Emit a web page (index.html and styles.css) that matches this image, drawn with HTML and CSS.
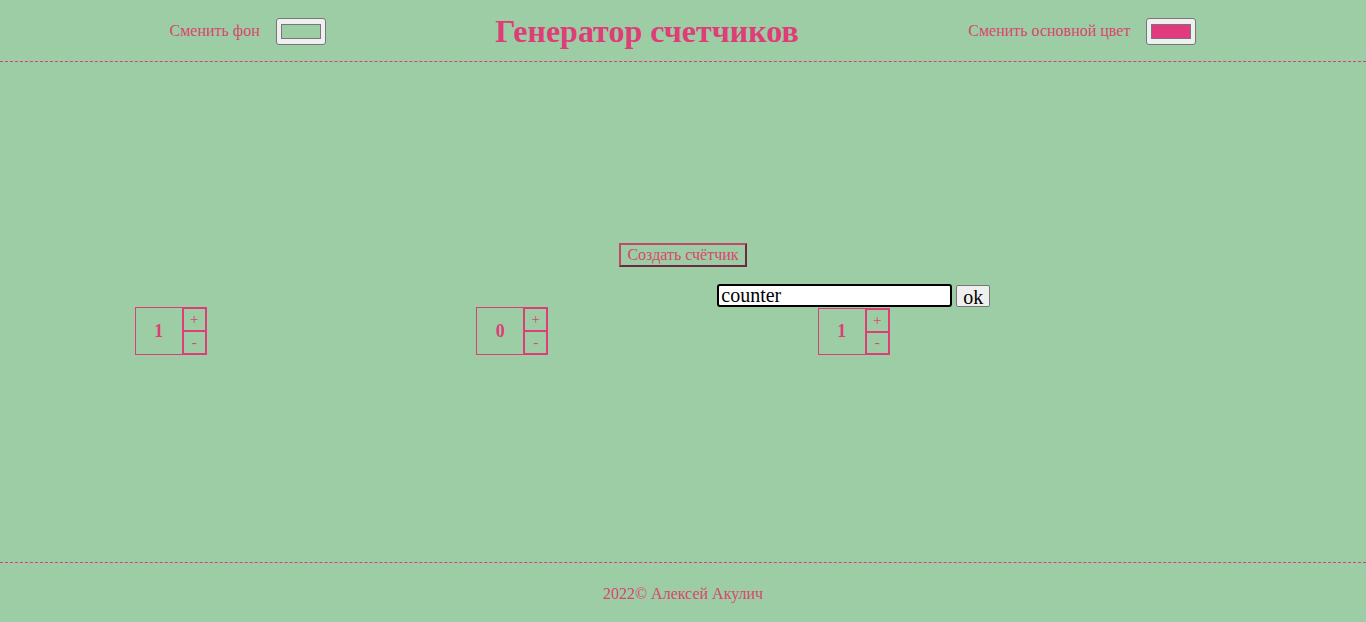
FILE: index.html
```html
<!DOCTYPE html>
<html lang="ru">
<head>
<meta charset="utf-8">
<title>Генератор счетчиков</title>
<link rel="stylesheet" href="styles.css">
</head>
<body>
<header class="header">
  <div class="picker">
    <span class="picker-label">Сменить фон</span>
    <input class="picker-input" type="color" value="#9ccda5">
  </div>
  <h1 class="title">Генератор счетчиков</h1>
  <div class="picker">
    <span class="picker-label">Сменить основной цвет</span>
    <input class="picker-input" type="color" value="#e23a7e">
  </div>
</header>
<main class="main">
  <button class="create-btn">Создать счётчик</button>
  <div class="counters">
    <div class="cell">
      <div class="counter">
        <div class="value">1</div>
        <div class="controls"><button class="ctl">+</button><button class="ctl">-</button></div>
      </div>
    </div>
    <div class="cell">
      <div class="counter">
        <div class="value">0</div>
        <div class="controls"><button class="ctl">+</button><button class="ctl">-</button></div>
      </div>
    </div>
    <div class="cell">
      <form class="name-form">
        <input class="name-input" type="text" value="counter">
        <button class="ok-btn" type="button">ok</button>
      </form>
      <div class="counter counter-shift">
        <div class="value">1</div>
        <div class="controls"><button class="ctl">+</button><button class="ctl">-</button></div>
      </div>
    </div>
    <div class="cell"></div>
  </div>
</main>
<footer class="footer">2022© Алексей Акулич</footer>
</body>
</html>
```
FILE: styles.css
```css
* { box-sizing: border-box; }
html, body { margin: 0; padding: 0; }
body {
  background: #9ccda5;
  color: #df3d78;
  font-family: "Liberation Serif", "Times New Roman", serif;
  font-size: 16px;
  height: 622px;
  overflow: hidden;
}
.header {
  height: 62px;
  display: flex;
  align-items: center;
  justify-content: space-evenly;
  border-bottom: 1px dashed #df3d78;
}
.picker {
  display: flex;
  align-items: center;
  gap: 16px;
  padding-top: 1px;
}
.picker-label { font-size: 16px; color: #d9466f; }
.picker-input {
  width: 50px;
  height: 27px;
  margin: 0;
  padding: 1px 2px;
  border: 1px solid #767676;
  border-radius: 3px;
  background: #efefef;
}
.title {
  margin: 0;
  font-size: 32px;
  font-weight: bold;
  color: #df3d78;
  padding-top: 1px;
}
.main {
  height: 500px;
  display: flex;
  flex-direction: column;
  align-items: center;
  padding-top: 181px;
}
.create-btn {
  height: 24px;
  padding: 0 6px;
  background: transparent;
  border: 2px outset #c2476f;
  color: #d9466f;
  font-family: "Liberation Serif", "Times New Roman", serif;
  font-size: 16px;
  line-height: 18px;
}
.counters {
  width: 100%;
  display: flex;
  margin-top: 40px;
}
.cell {
  width: 25%;
  display: flex;
  justify-content: center;
  position: relative;
}
.counter {
  display: flex;
  height: 48px;
}
.counter-shift { margin-top: 1px; height: 47px; }
.value {
  width: 48px;
  border: 1px solid #df3d78;
  display: flex;
  align-items: center;
  justify-content: center;
  font-weight: bold;
  font-size: 18px;
}
.controls {
  width: 24px;
  display: flex;
  flex-direction: column;
  border: 2px solid #df3d78;
  border-left: 1px solid #df3d78;
}
.ctl {
  flex: 1;
  margin: 0;
  padding: 0;
  background: transparent;
  border: none;
  color: #d9466f;
  font-family: "Liberation Serif", "Times New Roman", serif;
  font-size: 15px;
  line-height: 1;
}
.ctl + .ctl { border-top: 2px solid #df3d78; }
.name-form {
  position: absolute;
  bottom: 100%;
  left: 0;
  right: 0;
  display: flex;
  justify-content: center;
  align-items: center;
  gap: 4px;
  margin: 0;
}
.name-input {
  width: 235px;
  height: 23px;
  margin: 0;
  padding: 0 2px;
  border: 2px solid #000;
  border-radius: 3px;
  background: #fff;
  color: #000;
  font-family: "Liberation Serif", "Times New Roman", serif;
  font-size: 20px;
  outline: none;
}
.ok-btn {
  width: 34px;
  height: 22px;
  margin: 0;
  padding: 0;
  border: 1px solid #767676;
  border-radius: 2px;
  background: #efefef;
  color: #000;
  font-family: "Liberation Serif", "Times New Roman", serif;
  font-size: 20px;
  line-height: 18px;
  padding-top: 2px;
}
.footer {
  height: 60px;
  border-top: 1px dashed #df3d78;
  display: flex;
  align-items: center;
  justify-content: center;
  font-size: 16px;
  color: #d9466f;
  padding-top: 2px;
}
```
